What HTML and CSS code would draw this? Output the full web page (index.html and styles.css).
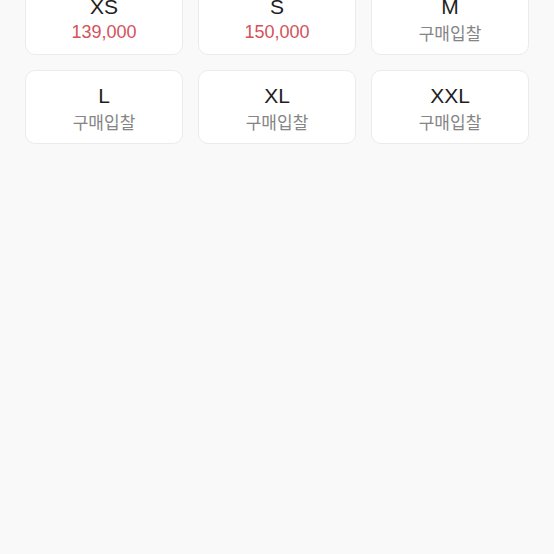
FILE: index.html
```html
<!DOCTYPE html>
<html lang="ko">
<head>
<meta charset="utf-8">
<link rel="stylesheet" href="styles.css">
</head>
<body>
<div class="grid">
  <div class="card"><div class="size">XS</div><div class="price">139,000</div></div>
  <div class="card"><div class="size">S</div><div class="price">150,000</div></div>
  <div class="card"><div class="size">M</div><div class="bid">구매입찰</div></div>
  <div class="card"><div class="size">L</div><div class="bid">구매입찰</div></div>
  <div class="card"><div class="size">XL</div><div class="bid">구매입찰</div></div>
  <div class="card"><div class="size">XXL</div><div class="bid">구매입찰</div></div>
</div>
</body>
</html>
```
FILE: styles.css
```css
html, body {
  margin: 0;
  padding: 0;
  background: #f9f9f9;
  height: 100%;
  overflow: hidden;
}
body {
  font-family: "Liberation Sans", "Noto Sans CJK KR", sans-serif;
  padding: 0 25px;
}
.grid {
  margin-top: -19px;
  display: grid;
  grid-template-columns: repeat(3, 1fr);
  gap: 15px;
}
.card {
  background: #fff;
  border: 1px solid #ebebeb;
  border-radius: 10px;
  height: 74px;
  box-sizing: border-box;
  padding-top: 13px;
  text-align: center;
}
.size {
  font-size: 21px;
  line-height: 24px;
  color: #1e1e1e;
}
.price, .bid {
  line-height: 27px;
}
.price {
  font-size: 18px;
  color: #d4525a;
}
.bid {
  font-family: "Noto Sans CJK KR", sans-serif;
  font-size: 17px;
  color: #858585;
}
```
